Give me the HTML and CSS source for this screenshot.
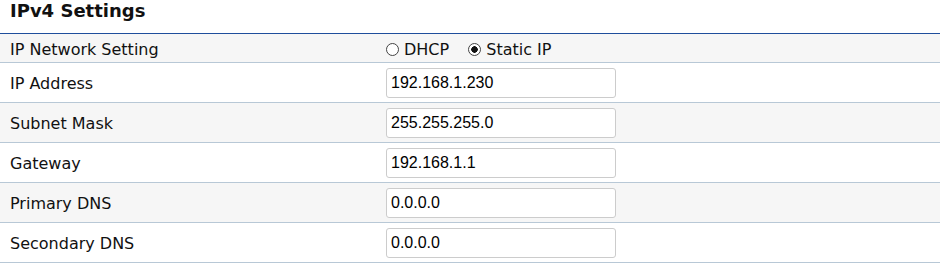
FILE: index.html
```html
<!DOCTYPE html>
<html lang="en">
<head>
    <meta charset="UTF-8">
    <title>IPv4 Settings</title>
    <link rel="stylesheet" href="styles.css">
</head>
<body>
    <div class="panel">
        <h2 class="panel-title">IPv4 Settings</h2>
        <table class="settings">
            <tr>
                <td class="label">IP Network Setting</td>
                <td class="value">
                    <label class="radio"><input type="radio" name="mode">DHCP</label>
                    <label class="radio"><input type="radio" name="mode" checked>Static IP</label>
                </td>
            </tr>
            <tr>
                <td class="label">IP Address</td>
                <td class="value"><input type="text" class="field" value="192.168.1.230"></td>
            </tr>
            <tr>
                <td class="label">Subnet Mask</td>
                <td class="value"><input type="text" class="field" value="255.255.255.0"></td>
            </tr>
            <tr>
                <td class="label">Gateway</td>
                <td class="value"><input type="text" class="field" value="192.168.1.1"></td>
            </tr>
            <tr>
                <td class="label">Primary DNS</td>
                <td class="value"><input type="text" class="field" value="0.0.0.0"></td>
            </tr>
            <tr>
                <td class="label">Secondary DNS</td>
                <td class="value"><input type="text" class="field" value="0.0.0.0"></td>
            </tr>
        </table>
    </div>
</body>
</html>
```

FILE: styles.css
```css
body {
    margin: 0;
    font-family: "DejaVu Sans", Verdana, sans-serif;
    color: #111;
    background: #fff;
}
.panel-title {
    margin: 0;
    padding: 0 10px;
    height: 33px;
    line-height: 21px;
    font-size: 18px;
    font-weight: bold;
    border-bottom: 1px solid #1f4e9c;
}
.settings {
    width: 100%;
    border-collapse: collapse;
    font-size: 16px;
}
.settings td {
    border-bottom: 1px solid #b8c8d6;
    padding: 2px 0 0;
    height: 37px;
}
.settings tr:first-child td {
    height: 26px;
}
.settings tr:nth-child(odd) td {
    background-color: #f6f6f6;
}
.settings .label {
    width: 376px;
    padding-left: 10px;
}
.settings .value {
    padding-top: 0;
    height: 39px;
}
.settings tr:first-child .value {
    padding-top: 2px;
    height: 26px;
}
.radio {
    margin-right: 14px;
}
.radio input {
    appearance: none;
    box-sizing: border-box;
    width: 13px;
    height: 13px;
    margin: 0 5px 0 0;
    border: 1px solid #444;
    border-radius: 50%;
    background: #fff;
    vertical-align: -1px;
}
.radio input:checked {
    background: radial-gradient(circle, #111 0 3px, #fff 3.5px);
}
.field {
    box-sizing: border-box;
    width: 230px;
    height: 30px;
    padding: 0 4px;
    font-family: "Liberation Sans", Arial, sans-serif;
    font-size: 16px;
    color: #000;
    border: 1px solid #ccc;
    border-radius: 3px;
    vertical-align: middle;
}
```
